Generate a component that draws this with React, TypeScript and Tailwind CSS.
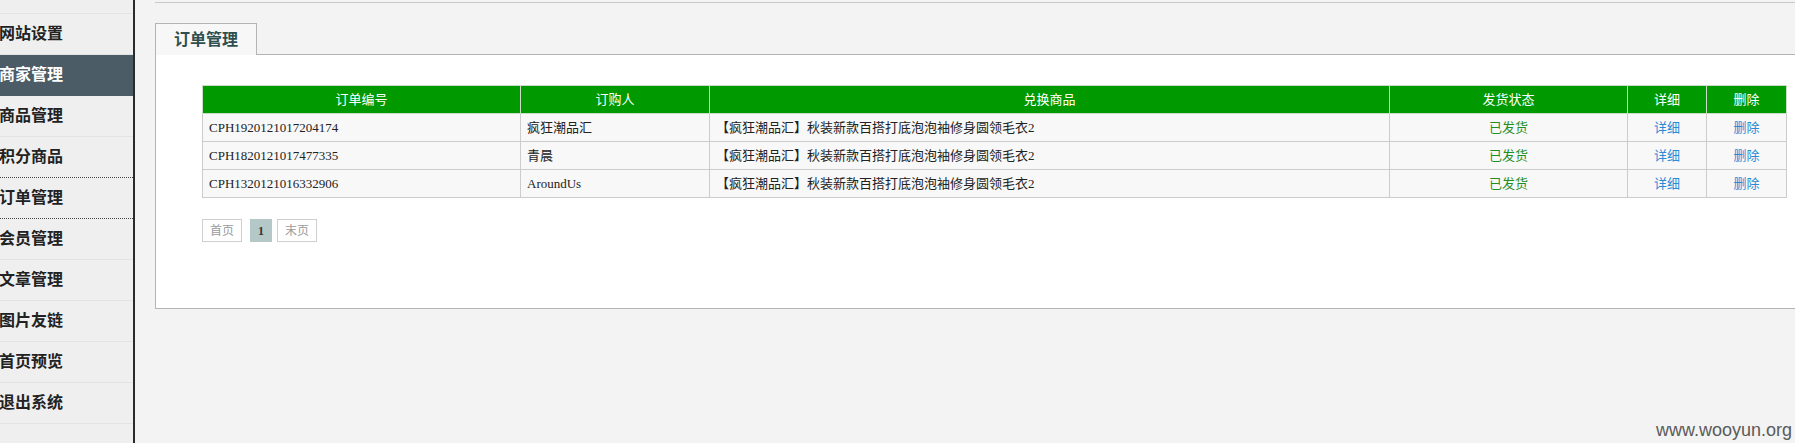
import React from "react";

const menu = [
    { label: "网站设置" },
    { label: "商家管理", active: true },
    { label: "商品管理" },
    { label: "积分商品", dotted: true },
    { label: "订单管理", dotted: true },
    { label: "会员管理" },
    { label: "文章管理" },
    { label: "图片友链" },
    { label: "首页预览" },
    { label: "退出系统" },
];

const orders = [
    { no: "CPH1920121017204174", buyer: "疯狂潮品汇" },
    { no: "CPH1820121017477335", buyer: "青晨" },
    { no: "CPH1320121016332906", buyer: "AroundUs" },
];

const product = "【疯狂潮品汇】秋装新款百搭打底泡泡袖修身圆领毛衣2";

function Sidebar() {
    return (
        <aside className="w-[135px] shrink-0 h-[443px] bg-[#efefef] border-r-2 border-[#2b2b2b] overflow-hidden">
            <div className="h-[14px] border-b border-[#e3e3e3]" />
            {menu.map((m) => (
                <div
                    key={m.label}
                    className={`h-[41px] flex items-center text-[16px] font-bold border-b ${
                        m.active
                            ? "bg-[#4b5c66] text-white border-[#4b5c66]"
                            : m.dotted
                            ? "text-[#222] border-dotted border-[#444]"
                            : "text-[#222] border-[#e3e3e3]"
                    }`}
                >
                    <span className="-ml-px">{m.label}</span>
                </div>
            ))}
        </aside>
    );
}

function Pager() {
    return (
        <div className="flex items-center mt-[21px] text-[12px]">
            <span className="w-[40px] h-[23px] border border-[#cfcfcf] text-[#9a9a9a] flex items-center justify-center">首页</span>
            <span className="ml-[8px] w-[22px] h-[23px] bg-[#b3c8c7] text-[#333] font-bold flex items-center justify-center font-['Liberation_Serif']">1</span>
            <span className="ml-[5px] w-[40px] h-[23px] border border-[#cfcfcf] text-[#9a9a9a] flex items-center justify-center">末页</span>
        </div>
    );
}

function OrderTable() {
    return (
        <table className="table-fixed border-collapse w-[1584px] text-[13px]">
            <colgroup>
                <col className="w-[318px]" />
                <col className="w-[189px]" />
                <col className="w-[680px]" />
                <col className="w-[238px]" />
                <col className="w-[79px]" />
                <col className="w-[80px]" />
            </colgroup>
            <thead>
                <tr className="h-[28px] bg-[#009900] text-white">
                    {["订单编号", "订购人", "兑换商品", "发货状态", "详细", "删除"].map((h) => (
                        <th key={h} className="font-normal border border-[#c9dcc9] text-center">
                            {h}
                        </th>
                    ))}
                </tr>
            </thead>
            <tbody>
                {orders.map((o) => (
                    <tr key={o.no} className="h-[28px] bg-[#f8f8f8] text-[#222]">
                        <td className="border border-[#cccccc] pl-[6px]">{o.no}</td>
                        <td className="border border-[#cccccc] pl-[6px]">{o.buyer}</td>
                        <td className="border border-[#cccccc] pl-[6px]">{product}</td>
                        <td className="border border-[#cccccc] text-center text-[#1f8f1f]">已发货</td>
                        <td className="border border-[#cccccc] text-center text-[#2a8ad6]">详细</td>
                        <td className="border border-[#cccccc] text-center text-[#2a8ad6]">删除</td>
                    </tr>
                ))}
            </tbody>
        </table>
    );
}

export default function App() {
    return (
        <div className="relative flex w-[1795px] h-[443px] overflow-hidden bg-[#f3f3f3] font-['Liberation_Serif','Noto_Sans_CJK_SC',serif]">
            <Sidebar />
            <main className="flex-1 min-w-0 pl-[20px]">
                <div className="mt-[2px] border-t border-[#c8c8c8]" />
                <div className="mt-[20px] relative z-10 -mb-px w-[102px] h-[32px] bg-[#f7f7f7] border border-b-0 border-[#b4b4b4] pl-[18px] flex items-center">
                    <span className="text-[16px] font-bold text-[#2f4f4f]">订单管理</span>
                </div>
                <div className="w-[1700px] h-[255px] bg-white border border-[#b4b4b4] pl-[46px] pt-[30px]">
                    <OrderTable />
                    <Pager />
                </div>
            </main>
            <div className="absolute right-[3px] bottom-[2px] text-[18px] leading-[22px] text-[#5a5a5a] font-['Liberation_Sans',sans-serif]">
                www.wooyun.org
            </div>
        </div>
    );
}
